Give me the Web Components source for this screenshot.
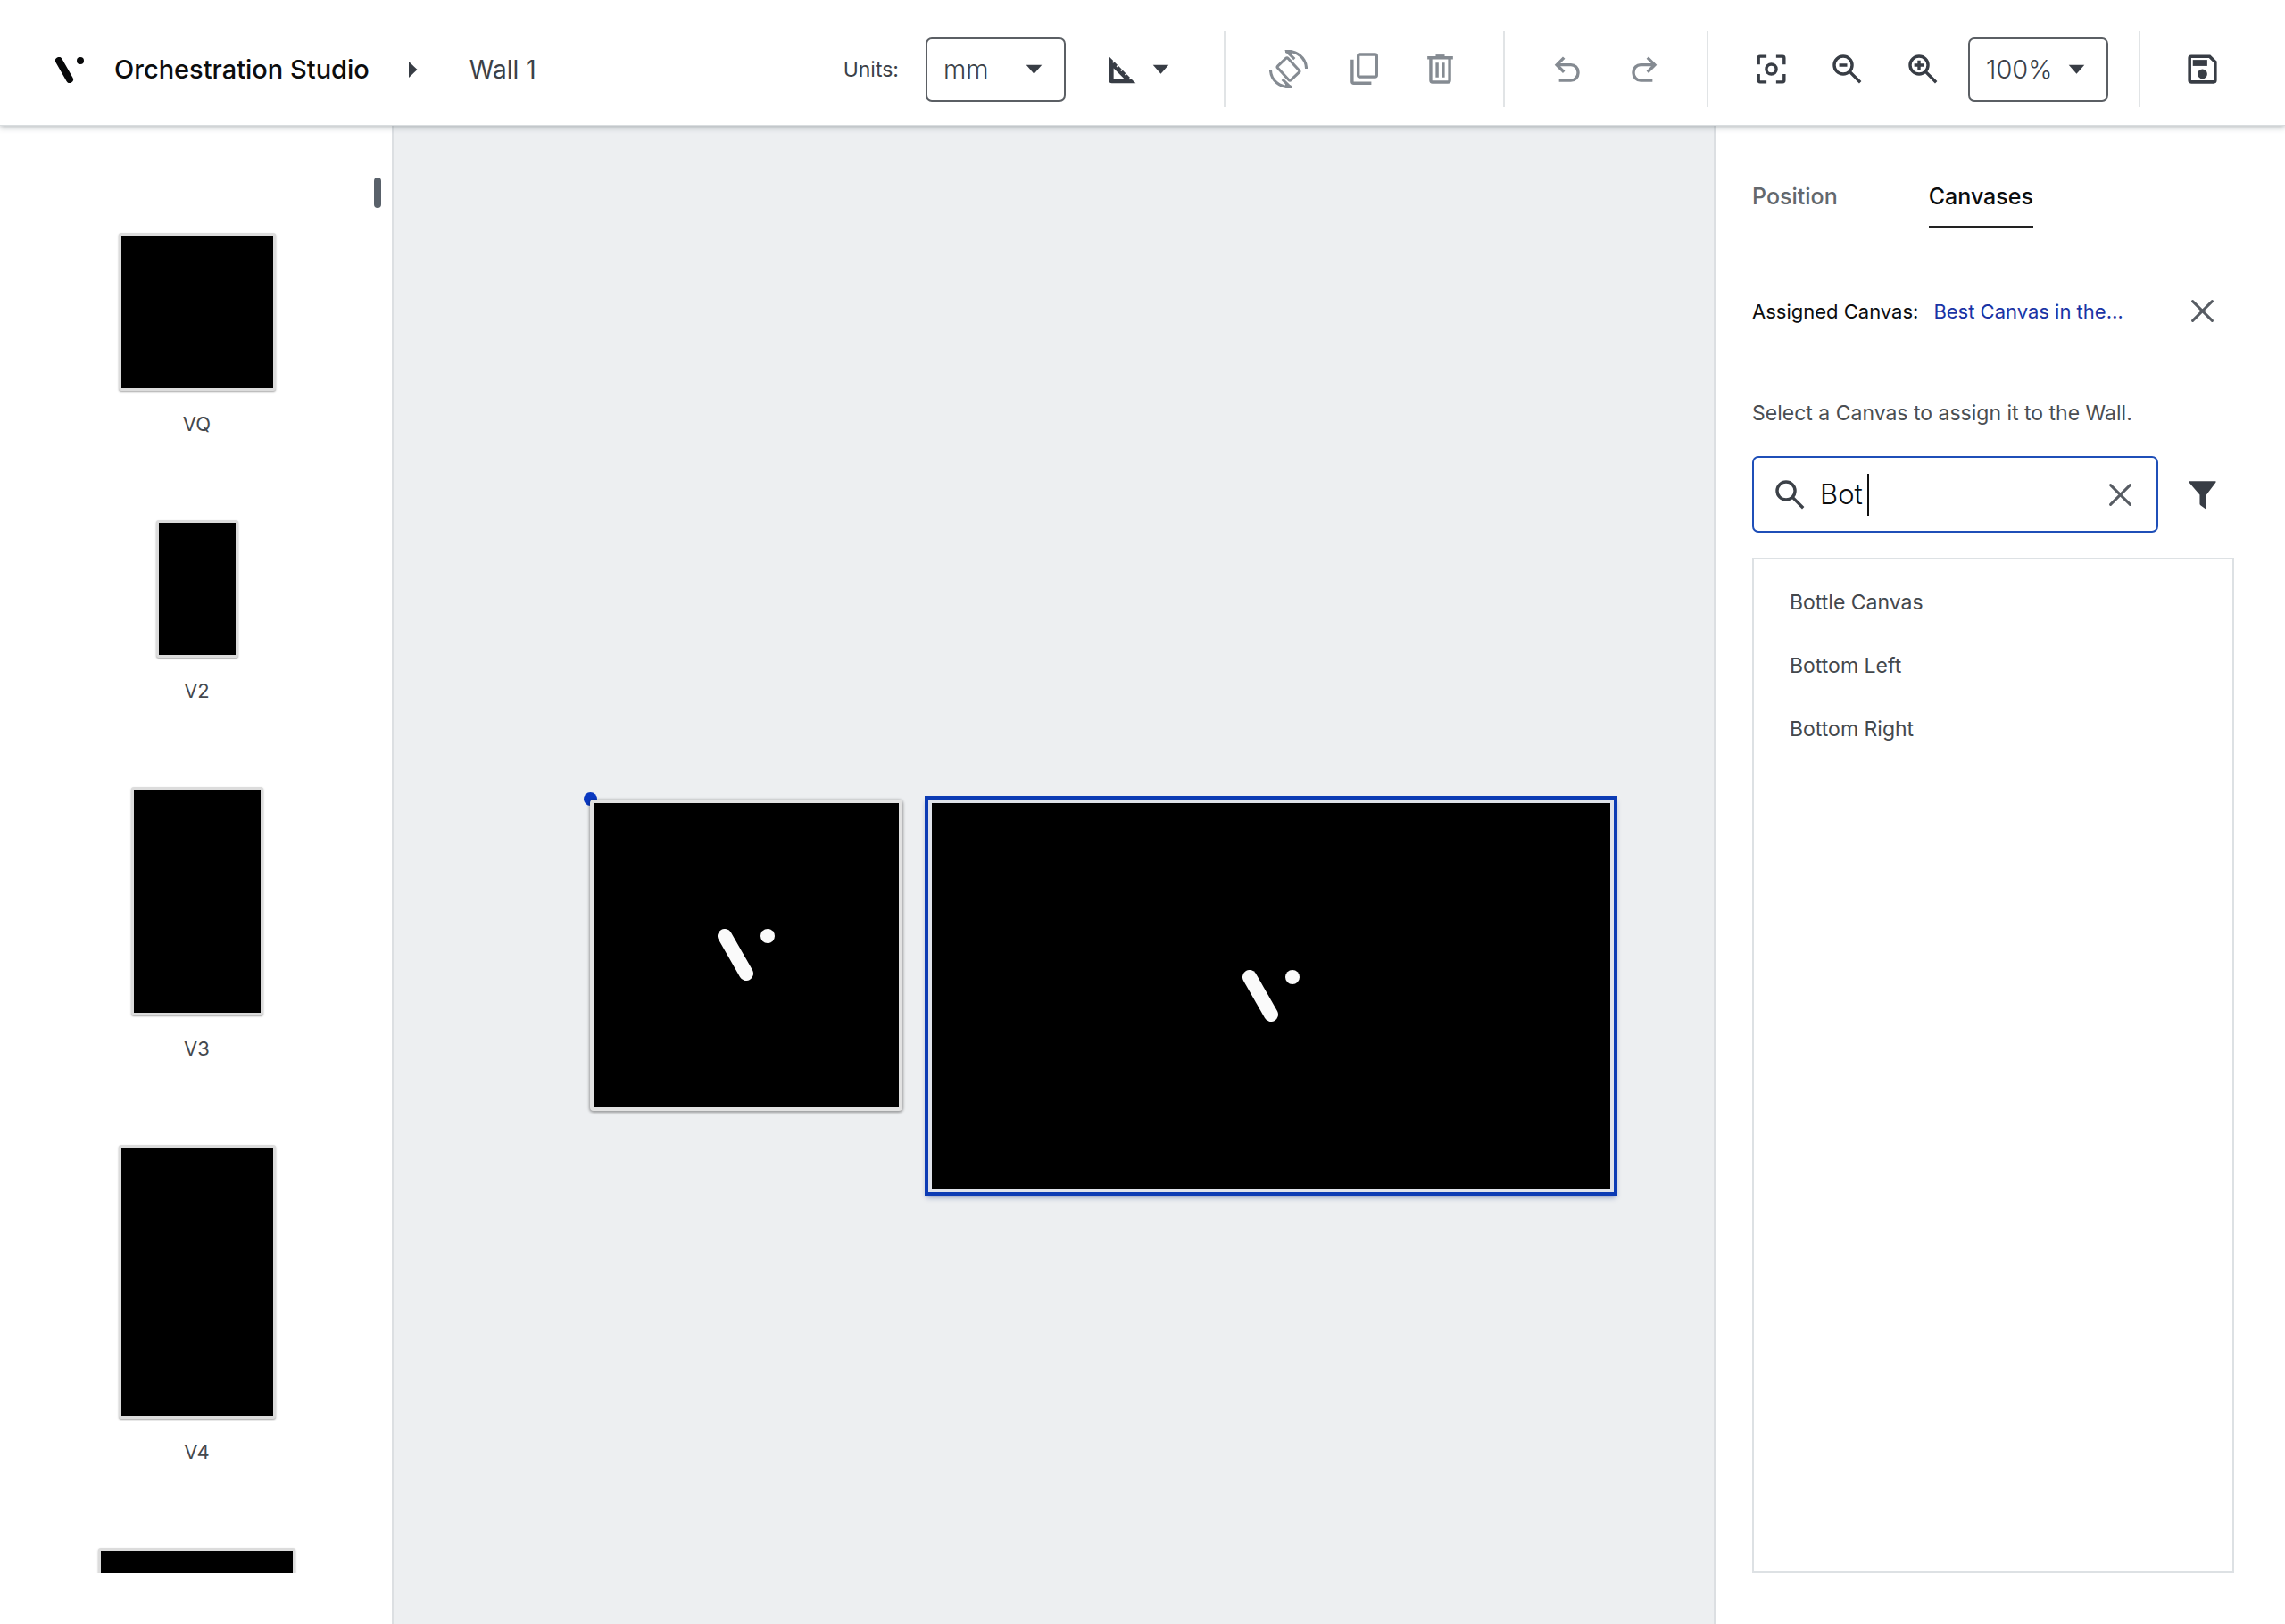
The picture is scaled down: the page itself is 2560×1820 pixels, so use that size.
<!DOCTYPE html>
<html lang="en">
<head>
<meta charset="utf-8">
<title>Orchestration Studio</title>
<style>
  html, body { height: 100%; }
  body { margin: 0; font-family: Inter, "Liberation Sans", sans-serif; color: #3c4148; background: #fff; }
</style>
</head>
<body>
<studio-app></studio-app>
<script>
const define = (name, html, setup) => {
  const template = document.createElement('template');
  template.innerHTML = html;
  customElements.define(name, class extends HTMLElement {
    connectedCallback() {
      if (this.shadowRoot) return;
      this.attachShadow({ mode: 'open' }).append(template.content.cloneNode(true));
      if (setup) setup(this, this.shadowRoot);
    }
  });
};

const stroke = 'fill="none" stroke="currentColor"';
const ICONS = {
  ruler: `<path fill="currentColor" fill-rule="evenodd" d="M3.600 4.100L20.300 20.800H5.400q-1.800 0-1.800-1.800zM6.500 11.400v7h7z"/><path stroke="#fff" stroke-width=".9" d="M7.300 6.500L5.900 7.900M9.900 9.100L8.500 10.500M12.500 11.700L11.100 13.100M15.100 14.300L13.700 15.700M17.700 16.900L16.300 18.300"/>`,
  down: `<path fill="currentColor" d="M7.1 9.3h9.8L12 14.9z"/>`,
  rotate: `<g ${stroke} stroke-width="1.7"><rect x="7.6" y="6" width="8.8" height="12" rx="1" transform="rotate(-43 12 12)"/><path d="M10 .9C17.2.1 23.1 5 23.2 11.7M10.6.6l5.2 5M14 23.1C6.800 23.900 .9 19 .8 12.300M13.400 23.400l-5.200-5"/></g><path fill="currentColor" d="M9.600.1h4.400v3.200zM14.400 23.900h-4.400v-3.200z"/>`,
  copy: `<g ${stroke} stroke-width="1.900"><rect x="8.2" y="2.800" width="11.500" height="14" rx="1"/><path d="M4.400 6v13.800q0 1 1 1h11"/></g>`,
  trash: `<g ${stroke} stroke-width="1.900"><path d="M4 4.900h16M6.100 5v14q0 1.100 1.100 1.100h9.600q1.100 0 1.100-1.100V5M10.100 8v9.200M13.900 8v9.200"/><path d="M9.200 3.800h5.600"/></g>`,
  undo: `<path ${stroke} stroke-width="1.900" d="M6.500 19h7.400a4.500 4.500 0 0 0 4.500-4.500v-.7a4.500 4.500 0 0 0-4.500-4.500H5.200M9.600 4.800L5.100 9.300l4.500 4.500"/>`,
  redo: `<path ${stroke} stroke-width="1.900" d="M17.500 19h-7.400a4.500 4.500 0 0 1-4.500-4.500v-.7a4.500 4.500 0 0 1 4.500-4.500h8.700M14.400 4.800l4.500 4.500-4.500 4.500"/>`,
  focus: `<g ${stroke} stroke-width="1.900"><path d="M4 9V5q0-1 1-1h4M15 4h4q1 0 1 1v4M20 15v4q0 1-1 1h-4M9 20H5q-1 0-1-1v-4"/><circle cx="12" cy="12" r="3.100"/></g>`,
  zoomout: `<g ${stroke} stroke-width="1.900"><circle cx="9.500" cy="9.500" r="5.600"/><path d="M13.600 13.600l6.600 6.600M7 9.500h5"/></g>`,
  zoomin: `<g ${stroke} stroke-width="1.900"><circle cx="9.500" cy="9.500" r="5.600"/><path d="M13.600 13.600l6.600 6.600M6.500 9.500h6M9.500 6.500v6"/></g>`,
  save: `<g ${stroke} stroke-width="2"><path d="M5 4h11.500L20 7.500V19q0 1-1 1H5q-1 0-1-1V5q0-1 1-1z"/></g><path fill="currentColor" d="M6 6.200h9v3.800H6z"/><circle cx="12" cy="15" r="3" fill="currentColor"/>`,
  search: `<g ${stroke} stroke-width="1.900"><circle cx="9.500" cy="9.500" r="5.600"/><path d="M13.600 13.600l6.600 6.600"/></g>`,
  close: `<path ${stroke} stroke-width="1.700" stroke-linecap="round" d="M5.900 5.900l12.200 12.200M18.100 5.900L5.900 18.100"/>`,
  filter: `<path fill="currentColor" d="M4 3.500h16q.8 0 .3.800L14.500 12v8.200q0 1-.8.500l-2.900-2.100q-.5-.4-.5-1V12L3.700 4.300q-.5-.8.300-.8z"/>`
};

/* icon-glyph: one symbol of the icon set, coloured by its context */
define('icon-glyph', `
  <style>:host { display: block; width: 43px; height: 43px; } svg { display: block; width: 100%; height: 100%; }</style>
  <svg viewBox="0 0 24 24" aria-hidden="true"></svg>`,
  (el, root) => { root.querySelector('svg').innerHTML = ICONS[el.getAttribute('name')]; });

define('brand-mark', `
  <style>:host { display: block; width: 64px; } svg { display: block; width: 100%; }</style>
  <svg viewBox="0 0 64 58" aria-hidden="true">
    <path d="M8 8L32 50" stroke="currentColor" stroke-width="16" stroke-linecap="round"/>
    <circle cx="56" cy="8" r="8" fill="currentColor"/>
  </svg>`);

define('icon-button', `
  <style>
    :host { display: block; color: #383d45; }
    :host([disabled]) { color: #858b92; }
    button { display: flex; padding: 0; border: 0; background: none; color: inherit; cursor: pointer; }
  </style>
  <button type="button"></button>`,
  (el, root) => {
    const b = root.querySelector('button');
    b.setAttribute('aria-label', el.getAttribute('label'));
    b.disabled = el.hasAttribute('disabled');
    el.getAttribute('icon').split(' ').forEach(n => {
      const g = document.createElement('icon-glyph');
      g.setAttribute('name', n);
      b.append(g);
    });
  });

define('select-box', `
  <style>
    :host { display: block; }
    label { display: flex; align-items: center; gap: 30px; font-size: 23px; line-height: 30px; }
    .box { display: grid; grid-template-columns: 1fr auto; align-items: center; width: 157px; height: 72px; box-sizing: border-box; }
    select { grid-area: 1 / 1 / 2 / 3; width: 100%; height: 100%; padding: 0 0 0 18px; appearance: none; border: 2px solid #5b5f64; border-radius: 7px; background: #fff; font: inherit; font-size: 29px; font-weight: 300; color: #3c4148; }
    icon-glyph { grid-area: 1 / 2; margin-right: 14px; pointer-events: none; color: #383d45; }
  </style>
  <label><span></span><div class="box"><select><option></option></select><icon-glyph name="down"></icon-glyph></div></label>`,
  (el, root) => {
    const text = el.getAttribute('label'), span = root.querySelector('span');
    if (text) span.textContent = text;
    else { span.remove(); root.querySelector('select').setAttribute('aria-label', 'Zoom level'); }
    root.querySelector('option').textContent = el.getAttribute('value');
  });

define('app-header', `
  <style>
    :host { display: flex; align-items: center; height: 140px; padding: 0 71px 0 62px; background: #fff; border-bottom: 1px solid #d9dddf; box-shadow: 0 2px 6px rgba(60, 72, 80, .35); position: relative; }
    .crumbs { display: flex; align-items: center; flex: 1; font-size: 28px; line-height: 40px; padding-top: 16px; }
    .crumbs brand-mark { width: 32px; margin-right: 34px; color: #08090a; }
    .name { font-size: 29px; font-weight: 500; color: #0c0d0e; }
    .crumbs svg { width: 10px; height: 18px; margin: 0 58px 0 44px; }
    .tools { display: flex; align-items: center; padding-top: 15px; gap: 49px; }
    .group { display: flex; align-items: center; gap: 42px; }
    .group select-box { margin-left: -13px; }
    hr { width: 2px; height: 85px; margin: 0; border: 0; background: #e1e4e6; }
    .zoomrule { margin: 0 -1px 0 -15px; }
  </style>
  <div class="crumbs">
    <brand-mark></brand-mark>
    <span class="name">Orchestration Studio</span>
    <svg viewBox="0 0 10 18" aria-hidden="true"><path d="M0 0l9.500 9L0 18z" fill="#383d45"/></svg>
    <span>Wall 1</span>
  </div>
  <div class="tools">
    <div class="group">
      <select-box label="Units:" value="mm"></select-box>
      <icon-button icon="ruler down" label="Guides"></icon-button>
    </div>
    <hr>
    <div class="group">
      <icon-button disabled icon="rotate" label="Rotate"></icon-button>
      <icon-button disabled icon="copy" label="Duplicate"></icon-button>
      <icon-button disabled icon="trash" label="Delete"></icon-button>
    </div>
    <hr>
    <div class="group">
      <icon-button disabled icon="undo" label="Undo"></icon-button>
      <icon-button disabled icon="redo" label="Redo"></icon-button>
    </div>
    <hr>
    <div class="group">
      <icon-button icon="focus" label="Fit to view"></icon-button>
      <icon-button icon="zoomout" label="Zoom out"></icon-button>
      <icon-button icon="zoomin" label="Zoom in"></icon-button>
      <select-box value="100%"></select-box>
    </div>
    <hr class="zoomrule">
    <icon-button icon="save" label="Save"></icon-button>
  </div>`);

define('screen-thumb', `
  <style>
    :host { display: flex; flex-direction: column; align-items: center; gap: 22px; font-size: 22px; line-height: 30px; color: #44484d; }
    .frame { flex: none; box-sizing: border-box; border: 3px solid #dcdcdc; border-radius: 3px; background: #000; box-shadow: 0 1px 2px rgba(0, 0, 0, .35); }
  </style>
  <div class="frame"></div><slot></slot>`,
  (el, root) => {
    const f = root.querySelector('.frame');
    f.style.width = el.getAttribute('w') + 'px';
    f.style.height = el.getAttribute('h') + 'px';
  });

define('screen-library', `
  <style>
    :host { display: flex; box-sizing: border-box; width: 441px; padding: 57px 0; border-right: 2px solid #dcdfe2; background: #fff; }
    .list { flex: 1; min-height: 0; overflow: hidden; display: flex; flex-direction: column; gap: 93px; padding: 63px 0 0 22px; box-sizing: border-box; }
    .thumb { width: 8px; height: 34px; margin: 1px 12px 0 0; border-radius: 4px; background: #59616a; }
  </style>
  <div class="list">
    <screen-thumb w="176" h="177">VQ</screen-thumb>
    <screen-thumb w="92" h="154">V2</screen-thumb>
    <screen-thumb w="148" h="256">V3</screen-thumb>
    <screen-thumb w="176" h="307">V4</screen-thumb>
    <screen-thumb w="221" h="150"></screen-thumb>
  </div>
  <div class="thumb"></div>`);

define('wall-screen', `
  <style>
    :host { display: flex; align-items: center; justify-content: center; box-sizing: border-box; border: 4px solid #e2e2e2; border-radius: 4px; background: #000; color: #fafafa; box-shadow: 0 1px 3px 1px rgba(0, 0, 0, .35); }
    :host([selected]) { border-color: #dfe2ea; border-radius: 0; outline: 4px solid #0c3bb4; box-shadow: 0 4px 6px 2px rgba(12, 40, 120, .4); }
  </style>
  <brand-mark></brand-mark>`);

/* Free canvas: each screen sits at its own place, measured from the centre of the stage */
define('wall-stage', `
  <style>
    :host { display: block; position: relative; flex: 1; overflow: hidden; background: #edeff1; }
    .origin, wall-screen { position: absolute; }
    .origin { left: calc(50% - 527px); top: calc(50% - 93px); width: 15px; height: 15px; border-radius: 50%; background: #0a38c0; }
    .a { left: calc(50% - 520px); top: calc(50% - 85px); width: 350px; height: 349px; }
    .b { left: calc(50% - 141px); top: calc(50% - 85px); width: 768px; height: 440px; }
  </style>
  <div class="origin"></div>
  <wall-screen class="a"></wall-screen>
  <wall-screen class="b" selected></wall-screen>`);

define('search-field', `
  <style>
    :host { display: flex; align-items: center; flex: 1; box-sizing: border-box; height: 86px; padding: 0 19px 0 19px; border: 2px solid #1f4fb8; border-radius: 7px; background: #fff; color: #3c4148; }
    label { display: flex; margin-right: 12px; }
    input { field-sizing: content; min-width: 0; padding: 0; border: 0; outline: 0; background: none; font: inherit; font-size: 31px; line-height: 40px; font-weight: 300; color: #0c0d0e; caret-color: transparent; }
    .caret { width: 2px; height: 47px; margin-left: 5px; background: #111; }
    icon-button { margin-left: auto; color: #575c63; }
  </style>
  <label for="q"><icon-glyph name="search"></icon-glyph></label>
  <input id="q" type="text" value="Bot" aria-label="Search canvases"><span class="caret"></span>
  <icon-button icon="close" label="Clear search"></icon-button>`);

define('canvas-panel', `
  <style>
    :host { display: flex; flex-direction: column; box-sizing: border-box; width: 640px; padding: 61px 57px 57px 41px; border-left: 2px solid #dcdfe2; background: #fff; font-size: 23px; line-height: 30px; }
    .tabs { display: flex; gap: 102px; }
    .tabs button { padding: 0 0 15px; border: 0; border-bottom: 3px solid transparent; background: none; font: inherit; font-size: 25px; line-height: 36px; font-weight: 500; color: #63686d; }
    .tabs button[aria-selected=true] { color: #0c0d0e; border-color: #222; }
    .assigned { display: flex; align-items: center; margin: 71px 0 78px; padding-right: 14px; font-size: 22px; color: #0c0d0e; }
    a { color: #1a34a5; text-decoration: none; margin-left: 17px; }
    .assigned icon-button { margin-left: auto; color: #575c63; }
    p { margin: 0; color: #4a4e52; }
    .find { display: flex; align-items: center; gap: 28px; margin: 33px 0 28px; padding-right: 14px; }
    ul { flex: 1; margin: 0; padding: 13px 40px; list-style: none; border: 2px solid #dde1e4; color: #44484d; }
    li { line-height: 71px; }
  </style>
  <div class="tabs" role="tablist">
    <button role="tab" aria-selected="false">Position</button>
    <button role="tab" aria-selected="true">Canvases</button>
  </div>
  <div class="assigned"><span>Assigned Canvas:</span><a href="#canvas">Best Canvas in the…</a>
    <icon-button icon="close" label="Unassign canvas"></icon-button></div>
  <p>Select a Canvas to assign it to the Wall.</p>
  <div class="find"><search-field></search-field><icon-button icon="filter" label="Filter"></icon-button></div>
  <ul><li>Bottle Canvas</li><li>Bottom Left</li><li>Bottom Right</li></ul>`);

define('studio-app', `
  <style>
    :host { display: flex; flex-direction: column; height: 100vh; min-height: 900px; }
    app-header { z-index: 1; flex: none; }
    main { display: flex; flex: 1; min-height: 0; }
    screen-library, canvas-panel { flex: none; }
  </style>
  <app-header></app-header>
  <main><screen-library></screen-library><wall-stage></wall-stage><canvas-panel></canvas-panel></main>`);
</script>
</body>
</html>
